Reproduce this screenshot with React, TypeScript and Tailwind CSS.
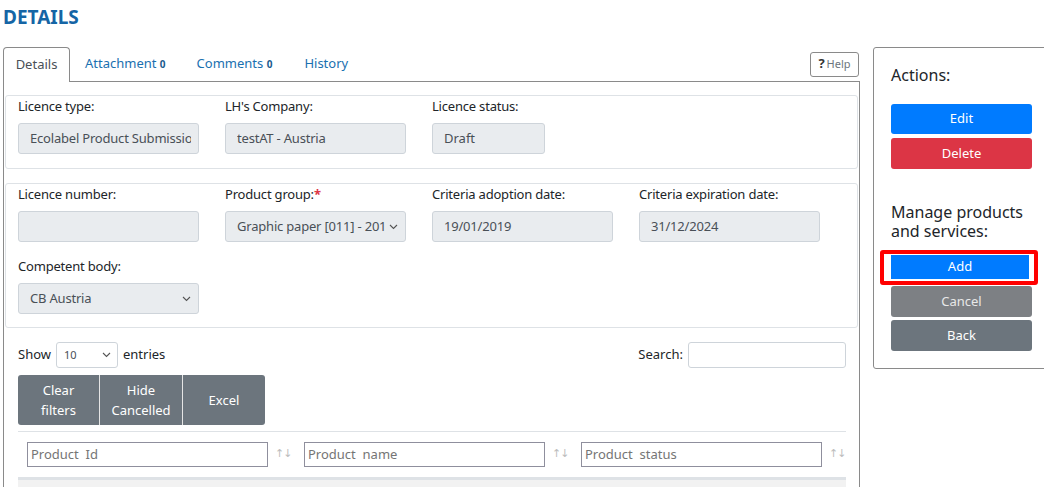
const font = { fontFamily: '"Noto Sans", "Open Sans", sans-serif' };

function Field({ label, value, select, req }: { label: string; value: string; select?: boolean; req?: boolean }) {
  return (
    <div className="w-[181px]">
      <div className="h-[27px] text-[13px] text-[#212529] leading-[20px] tracking-[-0.2px]">
        {label}
        {req && <span className="text-[#dc3545] font-bold">*</span>}
      </div>
      <div className="h-[31px] w-[181px] rounded-[3px] border border-[#ced4da] bg-[#e9ecef] flex items-center pl-[11px] pr-[7px] text-[13px] tracking-[-0.2px] text-[#495057] overflow-hidden whitespace-nowrap">
        <span className="flex-1 overflow-hidden">{value}</span>
        {select && (
          <svg width="9" height="6" viewBox="0 0 9 6" className="shrink-0 ml-1">
            <path d="M1 1l3.5 3.5L8 1" fill="none" stroke="#555" strokeWidth="1.1" />
          </svg>
        )}
      </div>
    </div>
  );
}

function FilterInput({ placeholder }: { placeholder: string }) {
  return (
    <div className="flex items-center">
      <div className="h-[25px] w-[241px] border border-[#8f8f9d] flex items-center pl-[3px] text-[13px] text-[#757575] whitespace-pre">
        {placeholder}
      </div>
      <span
        className="w-[36px] pl-[7px] text-[11px] text-[#bdbdbd] tracking-[-1px]"
        style={{ fontFamily: '"DejaVu Sans", sans-serif' }}
      >
        ↑↓
      </span>
    </div>
  );
}

export default function App() {
  return (
    <div className="w-[1044px] h-[487px] overflow-hidden bg-white" style={font}>
      <h1 className="pl-[3px] pt-[4px] h-[47px] text-[19px] font-bold text-[#1565a5] leading-[26px]">DETAILS</h1>

      <div className="flex">
        {/* Main column */}
        <div className="w-[857px] ml-[3px]">
          {/* Tabs */}
          <div className="flex items-end h-[35px] relative">
            <div className="h-[35px] w-[67px] border border-b-0 border-[#8a8a8a] rounded-t-[4px] bg-white flex items-center justify-center text-[13px] text-[#495057] relative z-10">
              Details
            </div>
            <div className="flex-1 h-[35px] border-b border-[#8a8a8a] flex items-center text-[13px] text-[#1a70b0]">
              <span className="ml-[15px]">Attachment <b className="text-[10px] text-[#1a5c8e]">0</b></span>
              <span className="ml-[31px]">Comments <b className="text-[10px] text-[#1a5c8e]">0</b></span>
              <span className="ml-[32px]">History</span>
              <span className="ml-auto mr-[1px] h-[25px] w-[49px] border border-[#8a8a8a] rounded-[3px] flex items-center justify-center text-[11px] text-[#6c757d]">
                <b className="text-[#333] text-[13px] mr-[2px]">?</b>Help
              </span>
            </div>
          </div>

          {/* Tab content */}
          <div className="border-x border-[#8a8a8a] h-[406px] pl-[1px] pr-[1px] pt-[13px]">
            <div className="border border-[#dee2e6] rounded-[3px] h-[74px] pl-[12px] flex gap-[26px]">
              <Field label="Licence type:" value="Ecolabel Product Submission" />
              <Field label="LH's Company:" value="testAT - Austria" />
              <div className="w-[112px]">
                <div className="h-[27px] text-[13px] text-[#212529] leading-[20px] tracking-[-0.2px]">Licence status:</div>
                <div className="h-[31px] w-[113px] rounded-[3px] border border-[#ced4da] bg-[#e9ecef] flex items-center pl-[11px] text-[13px] text-[#495057]">Draft</div>
              </div>
            </div>

            <div className="mt-[14px] border border-[#dee2e6] rounded-[3px] h-[145px] pl-[12px]">
              <div className="flex gap-[26px]">
                <Field label="Licence number:" value="" />
                <Field label="Product group:" value="Graphic paper [011] - 2019" select req />
                <Field label="Criteria adoption date:" value="19/01/2019" />
                <Field label="Criteria expiration date:" value="31/12/2024" />
              </div>
              <div className="mt-[14px]">
                <Field label="Competent body:" value="CB Austria" select />
              </div>
            </div>

            {/* Table controls */}
            <div className="pl-[13px] pr-[12px]">
              <div className="mt-[14px] h-[26px] flex items-center justify-between text-[13px] text-[#212529]">
                <div className="flex items-center">
                  Show
                  <div className="ml-[5px] mr-[5px] h-[26px] w-[62px] border border-[#ced4da] rounded-[3px] flex items-center pl-[7px] pr-[6px] text-[11px] text-[#495057]">
                    <span className="flex-1">10</span>
                    <svg width="9" height="6" viewBox="0 0 9 6">
                      <path d="M1 1l3.5 3.5L8 1" fill="none" stroke="#555" strokeWidth="1.1" />
                    </svg>
                  </div>
                  entries
                </div>
                <div className="flex items-center">
                  Search:
                  <div className="ml-[5px] h-[26px] w-[158px] border border-[#ced4da] rounded-[3px]" />
                </div>
              </div>

              <div className="mt-[7px] flex h-[50px] w-[247px] rounded-[3px] overflow-hidden text-[13px] text-white leading-[20px]">
                <div className="w-[82px] bg-[#6c757d] flex items-center justify-center text-center border-r border-[#e5e5e5]">Clear<br />filters</div>
                <div className="w-[83px] bg-[#6c757d] flex items-center justify-center text-center border-r border-[#e5e5e5]">Hide<br />Cancelled</div>
                <div className="flex-1 bg-[#6c757d] flex items-center justify-center">Excel</div>
              </div>

              <div className="mt-[6px] border-t border-[#dee2e6]" />

              <div className="mt-[10px] pl-[9px] flex">
                <FilterInput placeholder="Product  Id" />
                <FilterInput placeholder="Product  name" />
                <FilterInput placeholder="Product  status" />
              </div>

              <div className="mt-[10px] h-[12px] border-t-[3px] border-[#dee2e6] bg-[#f2f2f2]" />
            </div>
          </div>
        </div>

        {/* Actions panel */}
        <div className="ml-[13px] w-[180px] h-[322px] border border-[#8a8a8a] rounded-[3px] pl-[17px] pt-[16px] shrink-0">
          <div className="text-[16px] text-[#212529] leading-[22px]">Actions:</div>
          <div className="mt-[18px] w-[141px] flex flex-col gap-[4px] text-[13px] text-white">
            <div className="h-[30px] rounded-[3px] bg-[#007bff] flex items-center justify-center">Edit</div>
            <div className="h-[31px] rounded-[3px] bg-[#dc3545] flex items-center justify-center">Delete</div>
          </div>
          <div className="mt-[34px] text-[16px] text-[#212529] leading-[19px]">
            Manage products
            <br />
            and services:
          </div>
          <div className="mt-[9px] -ml-[11px] w-[158px] h-[35px] border-[4px] border-[#ff0000] rounded-[3px] bg-white pl-[7px] pr-[5px] pt-[1px]">
            <div className="h-[24px] bg-[#007bff] text-[13px] text-white flex items-center justify-center">Add</div>
          </div>
          <div className="w-[141px] flex flex-col text-[13px] text-white">
            <div className="mt-[1px] h-[31px] rounded-[3px] bg-[#7d8084] flex items-center justify-center text-[#e8e8e8]">Cancel</div>
            <div className="mt-[3px] h-[31px] rounded-[3px] bg-[#6c757d] flex items-center justify-center">Back</div>
          </div>
        </div>
      </div>
    </div>
  );
}
